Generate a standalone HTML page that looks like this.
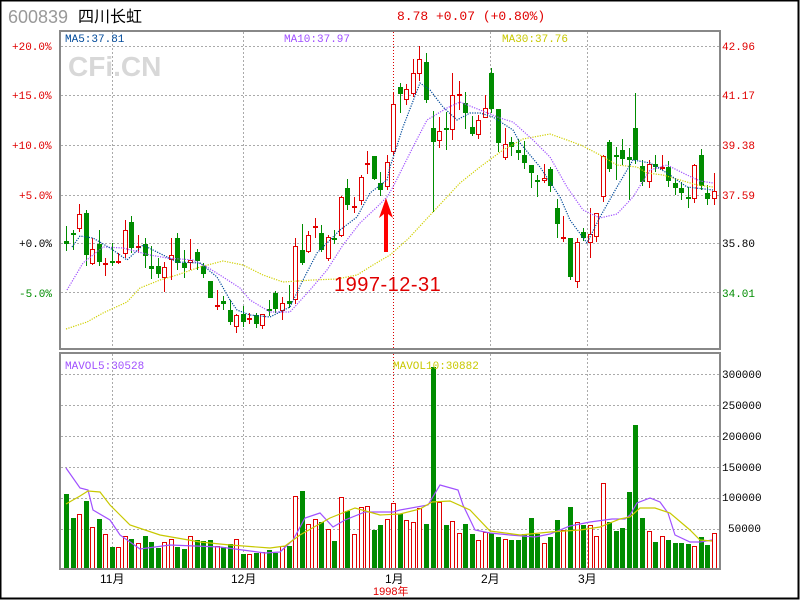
<!DOCTYPE html>
<html><head><meta charset="utf-8">
<style>
html,body{margin:0;padding:0;background:#fff;}
body{width:800px;height:600px;overflow:hidden;position:relative;}
svg{position:absolute;left:0;top:0;}
</style></head>
<body>
<svg id="s" width="800" height="600" xmlns="http://www.w3.org/2000/svg" font-family="Liberation Mono, monospace">
<rect x="0" y="0" width="800" height="600" fill="#fff"/>
<rect x="0.5" y="0.5" width="798" height="598" fill="none" stroke="#000" stroke-width="2"/>
<text x="8" y="23" font-family="Liberation Sans, sans-serif" font-size="18" fill="#999">600839</text>
<text x="78" y="22" font-family="Liberation Sans, 'Noto Sans CJK SC', sans-serif" font-size="16" fill="#000">四川长虹</text>
<text x="397" y="20" font-family="Liberation Mono, 'Noto Sans CJK SC', monospace" font-size="13" fill="#e00000">8.78 +0.07 (+0.80%)</text>
<g id="grid" stroke="#aaa" stroke-width="1" stroke-dasharray="2,2" fill="none">
<line x1="61" y1="46.5" x2="720" y2="46.5"/><line x1="61" y1="95.5" x2="720" y2="95.5"/>
<line x1="61" y1="145.5" x2="720" y2="145.5"/><line x1="61" y1="195.5" x2="720" y2="195.5"/>
<line x1="61" y1="243.5" x2="720" y2="243.5"/><line x1="61" y1="292.5" x2="720" y2="292.5"/>
<line x1="112.5" y1="32" x2="112.5" y2="349"/><line x1="243.5" y1="32" x2="243.5" y2="349"/>
<line x1="490.5" y1="32" x2="490.5" y2="349"/><line x1="587.5" y1="32" x2="587.5" y2="349"/>
<line x1="112.5" y1="354" x2="112.5" y2="569"/><line x1="243.5" y1="354" x2="243.5" y2="569"/>
<line x1="490.5" y1="354" x2="490.5" y2="569"/><line x1="587.5" y1="354" x2="587.5" y2="569"/>
<line x1="61" y1="374.5" x2="720" y2="374.5"/><line x1="61" y1="405.5" x2="720" y2="405.5"/>
<line x1="61" y1="436.5" x2="720" y2="436.5"/><line x1="61" y1="467.5" x2="720" y2="467.5"/>
<line x1="61" y1="498.5" x2="720" y2="498.5"/><line x1="61" y1="529.5" x2="720" y2="529.5"/>
</g>
<line x1="393.5" y1="32" x2="393.5" y2="349" stroke="#d00" stroke-dasharray="1,2"/>
<line x1="393.5" y1="354" x2="393.5" y2="569" stroke="#d00" stroke-dasharray="1,2"/>
<text x="68" y="76" font-family="Liberation Sans, sans-serif" font-weight="bold" font-size="28" fill="#d8d8d8">CFi.CN</text>
<g id="cndl"></g>
<g id="vol"></g>
<g id="lines" fill="none"></g>
<rect x="60" y="31" width="660" height="318" fill="none" stroke="#888" stroke-width="2"/>
<rect x="60" y="353" width="660" height="216" fill="none" stroke="#888" stroke-width="2"/>
<g font-size="11">
<text x="65" y="42" fill="#004a9a">MA5:37.81</text>
<text x="284" y="42" fill="#a050ff">MA10:37.97</text>
<text x="502" y="42" fill="#c8c800">MA30:37.76</text>
<text x="65" y="369" fill="#a050ff">MAVOL5:30528</text>
<text x="393" y="369" fill="#c8c800">MAVOL10:30882</text>
<g fill="#e00000"><text x="12" y="50">+20.0%</text><text x="12" y="99">+15.0%</text><text x="12" y="149">+10.0%</text><text x="19" y="199">+5.0%</text>
<text x="722" y="50">42.96</text><text x="722" y="99">41.17</text><text x="722" y="149">39.38</text><text x="722" y="199">37.59</text></g>
<text x="19" y="247" fill="#000">+0.0%</text><text x="19" y="297" fill="#008c00">-5.0%</text>
<text x="722" y="247" fill="#000">35.80</text><text x="722" y="297" fill="#008c00">34.01</text>
<g fill="#000"><text x="722" y="378">300000</text><text x="722" y="409">250000</text><text x="722" y="440">200000</text><text x="722" y="471">150000</text><text x="722" y="501">100000</text><text x="728" y="532">50000</text></g>
</g>
<g font-family="Liberation Sans, 'Noto Sans CJK SC', sans-serif" font-size="12" fill="#000">
<text x="100" y="583">11月</text><text x="231" y="583">12月</text><text x="385" y="583">1月</text><text x="481" y="583">2月</text><text x="578" y="583">3月</text>
<text x="373" y="595" font-size="11" fill="#e00000">1998年</text>
</g>
<polygon points="386,198 379,218 384,214 384,252 388,252 388,214 393,218" fill="#f00"/>
<text x="334" y="291" font-family="Liberation Sans, sans-serif" font-size="20" fill="#e00000" letter-spacing="0.5">1997-12-31</text>
</svg>
<script>
var C=[
['G',241,244,226,251],['G',233,235,230,250],['R',214,229,204,232],['G',213,255,210,266],['R',249,264,238,265],['G',244,262,230,266],['R',263,265,258,276],['G',261,263,243,266],['R',261,263,253,264],['R',230,254,220,258],
['G',222,248,216,253],['R',246,247,235,253],['G',244,256,238,268],['G',266,269,246,279],['G',266,274,258,278],['R',267,278,262,292],['R',255,260,238,280],['G',238,263,233,270],['G',263,268,250,278],['R',260,263,239,270],
['G',252,261,249,270],['G',266,274,263,278],['G',281,298,281,298],['R',305,306,290,310],['G',301,304,296,310],['G',310,322,300,325],['R',315,327,314,333],['G',314,322,306,327],['R',318,319,313,324],['G',315,324,313,328],
['R',314,326,315,329],['G',309,310,300,316],['G',293,309,291,313],['R',303,311,297,320],['G',301,304,285,308],['R',246,300,238,304],['G',250,263,224,265],['R',235,252,231,253],['R',226,227,218,238],['G',233,250,225,252],
['R',237,259,235,261],['G',238,238,230,244],['R',197,236,196,237],['G',188,205,179,210],['R',206,207,197,213],['R',177,201,175,205],['R',163,164,151,174],['G',156,179,156,180],['G',183,190,172,196],['R',162,187,155,190],
['R',104,152,93,155],['G',87,94,83,113],['R',89,100,84,105],['R',73,94,59,97],['R',59,74,46,81],['G',62,100,53,103],['G',128,142,111,212],['R',131,141,117,148],['G',128,130,112,150],['R',95,130,73,140],
['R',94,95,81,110],['G',103,113,92,129],['G',127,134,116,136],['R',120,135,115,139],['R',108,118,95,118],['G',73,109,68,113],['G',109,143,109,152],['R',144,158,128,160],['G',142,147,137,156],['G',150,153,139,160],
['G',155,163,141,169],['G',165,173,165,188],['G',180,180,175,197],['R',178,181,164,183],['G',169,186,167,192],['G',208,224,199,238],['R',237,237,216,242],['G',238,277,238,280],['R',242,282,238,288],['G',232,238,228,241],
['R',234,243,208,258],['R',213,237,213,242],['R',156,197,155,202],['G',142,169,140,172],['G',155,157,147,180],['G',150,159,139,165],['G',157,160,148,200],['G',128,160,93,164],['G',166,182,160,186],['R',164,182,160,188],
['G',164,167,155,172],['R',167,167,155,170],['G',167,181,161,187],['G',183,188,178,195],['G',188,193,182,200],['G',197,199,187,208],['R',165,199,164,203],['G',155,186,149,190],['G',193,199,185,205],['R',191,199,173,205]];
var V=[['G',494],['G',518],['R',514],['G',501],['R',527],['G',519],['R',534],['G',547],['R',547],['R',536],['G',539],['R',543],['G',536],['G',542],['G',548],['R',542],['R',539],['G',547],['G',549],['R',536],
['G',540],['G',541],['G',540],['R',546],['G',547],['G',544],['R',539],['G',554],['R',554],['G',553],['R',552],['G',550],['G',553],['R',546],['G',546],['R',496],['G',491],['R',524],['R',519],['G',522],
['R',529],['G',541],['R',497],['G',511],['R',534],['R',507],['R',506],['G',530],['G',525],['R',519],['R',503],['G',514],['R',520],['R',522],['R',508],['G',524],['G',367],['R',502],['G',525],['R',521],
['R',533],['G',524],['G',534],['R',540],['R',532],['G',533],['G',537],['R',539],['G',540],['G',540],['G',534],['G',518],['G',534],['R',543],['G',537],['G',520],['R',530],['G',507],['R',522],['G',525],
['R',525],['R',536],['R',483],['G',522],['G',531],['G',528],['G',492],['G',425],['G',518],['R',531],['G',542],['R',536],['G',540],['G',543],['G',543],['G',544],['R',546],['G',537],['G',545],['R',533]];
var RED='#e00000',GRN='#008c00',h='';
for(var i=0;i<C.length;i++){var c=C[i],x=Math.round(66+6.545*i),col=c[0]=='R'?RED:GRN;
h+='<line x1="'+(x+0.5)+'" y1="'+c[3]+'" x2="'+(x+0.5)+'" y2="'+c[4]+'" stroke="'+col+'"/>';
var t=c[1],b=c[2];
if(b-t<2){h+='<rect x="'+(x-2)+'" y="'+t+'" width="5" height="2" fill="'+col+'"/>';}
else if(c[0]=='R'){h+='<rect x="'+(x-1.5)+'" y="'+(t+0.5)+'" width="4" height="'+(b-t-1)+'" fill="#fff" stroke="'+RED+'"/>';}
else{h+='<rect x="'+(x-2)+'" y="'+t+'" width="5" height="'+(b-t)+'" fill="'+GRN+'"/>';}}
document.getElementById('cndl').innerHTML=h;h='';
for(i=0;i<V.length;i++){var v=V[i],x=Math.round(66+6.545*i);
if(v[0]=='R')h+='<rect x="'+(x-1.5)+'" y="'+(v[1]+0.5)+'" width="4" height="'+(569-v[1]-1)+'" fill="#fff" stroke="'+RED+'"/>';
else h+='<rect x="'+(x-2)+'" y="'+v[1]+'" width="5" height="'+(569-v[1])+'" fill="'+GRN+'"/>';}
document.getElementById('vol').innerHTML=h;
function pl(p,c,d){return '<polyline points="'+p+'" stroke="'+c+'" stroke-width="1.2"'+(d?' stroke-dasharray="'+d+'"':'')+'/>';}
var L='';
L+=pl('66,329 87,322 103,313 127,302 140,288 160,280 177,275 200,267 223,261 243,265 263,275 283,282 313,280 337,279 357,275 373,265 390,255 408,239 433,212 460,183 480,167 503,150 523,139 550,134 567,140 583,146 600,155 617,165 637,167 647,173 663,175 680,180 697,185 713,187','#d0d000','1.2,1.3');
L+=pl('67,290 83,263 103,247 123,248 150,255 167,258 193,260 207,267 223,277 240,288 250,300 270,312 290,312 310,290 327,270 343,245 360,223 377,207 387,197 393,187 413,147 427,120 447,108 460,102 480,110 500,118 513,122 533,140 550,157 567,187 583,210 600,218 617,214 633,197 650,170 667,165 687,175 700,181 713,183','#a050ff','1.2,1.3');
L+=pl('72,247 80,236 93,238 110,248 127,260 143,245 157,252 177,262 200,263 217,277 230,300 237,310 250,315 270,317 290,307 303,280 317,253 340,230 357,217 370,193 387,180 390,167 403,127 420,83 430,90 443,107 457,120 470,113 480,113 493,117 513,130 520,143 540,167 560,197 570,220 587,243 600,217 617,187 633,160 650,163 667,173 687,187 713,190','#004a9a','1.2,1.3');
L+=pl('66,468 80,488 88,490 93,510 110,520 120,535 140,549 170,545 220,547 265,553 280,552 293,540 305,518 320,513 333,527 345,520 365,512 393,512 400,510 428,505 440,485 458,490 463,505 475,530 490,533 510,535 535,537 550,534 570,526 590,522 612,519 625,519 630,515 637,503 650,498 660,502 668,513 675,535 690,542 700,542 712,540','#a050ff');
L+=pl('66,504 80,496 88,491 100,492 110,505 120,515 130,525 160,535 200,542 230,545 270,548 285,546 300,535 330,518 355,508 380,515 400,514 420,509 432,502 450,501 470,510 490,531 520,535 550,532 580,530 600,527 620,519 630,517 640,508 655,508 670,513 690,530 700,540 712,541','#c8c800');
document.getElementById('lines').innerHTML=L;
</script>
</body></html>
